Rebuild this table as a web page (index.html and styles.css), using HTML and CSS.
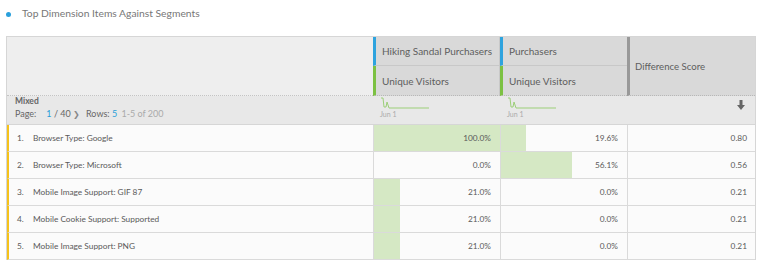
FILE: index.html
```html
<!DOCTYPE html>
<html>
<head>
<meta charset="utf-8">
<link rel="stylesheet" href="styles.css">
</head>
<body>
<div class="title"><span class="dot"></span><span>Top Dimension Items Against Segments</span></div>
<div class="table">
  <div class="h-dim"></div>
  <div class="h-seg blue c2">Hiking Sandal Purchasers</div>
  <div class="h-seg blue c3">Purchasers</div>
  <div class="h-diff">Difference Score</div>
  <div class="h-met green c2">Unique Visitors</div>
  <div class="h-met green c3">Unique Visitors</div>

  <div class="ctrl-dim">
    <div class="mixed">Mixed</div>
    <div class="pager">Page:<span class="blue-t p1">1</span> / 40<span class="chev">&#x276F;</span> Rows: <span class="blue-t">5</span> <span class="muted">1-5 of 200</span></div>
  </div>
  <div class="ctrl-spark">
    <svg width="50" height="12" viewBox="0 0 50 12"><path d="M1 1 L3 1 L4 10 L6 10 L7 5 L9 11 L49 11" fill="none" stroke="#9ccf78" stroke-width="1"/></svg>
    <div class="jun">Jun 1</div>
  </div>
  <div class="ctrl-spark">
    <svg width="50" height="12" viewBox="0 0 50 12"><path d="M1 1 L3 1 L4 10 L6 10 L7 5 L9 11 L49 11" fill="none" stroke="#9ccf78" stroke-width="1"/></svg>
    <div class="jun">Jun 1</div>
  </div>
  <div class="ctrl-dl">
    <svg width="8" height="10" viewBox="0 0 8 10"><path d="M2.5 0 H5.5 V5 H8 L4 10 L0 5 H2.5 Z" fill="#666"/></svg>
  </div>

  <div class="row">
    <div class="dim"><span class="num">1.</span>Browser Type: Google</div>
    <div class="val"><span class="bar" style="width:100%"></span><span class="t">100.0%</span></div>
    <div class="val"><span class="bar" style="width:19.6%"></span><span class="t">19.6%</span></div>
    <div class="score">0.80</div>
  </div>
  <div class="row">
    <div class="dim"><span class="num">2.</span>Browser Type: Microsoft</div>
    <div class="val"><span class="bar" style="width:0%"></span><span class="t">0.0%</span></div>
    <div class="val"><span class="bar" style="width:56.1%"></span><span class="t">56.1%</span></div>
    <div class="score">0.56</div>
  </div>
  <div class="row">
    <div class="dim"><span class="num">3.</span>Mobile Image Support: GIF 87</div>
    <div class="val"><span class="bar" style="width:21%"></span><span class="t">21.0%</span></div>
    <div class="val"><span class="bar" style="width:0%"></span><span class="t">0.0%</span></div>
    <div class="score">0.21</div>
  </div>
  <div class="row">
    <div class="dim"><span class="num">4.</span>Mobile Cookie Support: Supported</div>
    <div class="val"><span class="bar" style="width:21%"></span><span class="t">21.0%</span></div>
    <div class="val"><span class="bar" style="width:0%"></span><span class="t">0.0%</span></div>
    <div class="score">0.21</div>
  </div>
  <div class="row">
    <div class="dim"><span class="num">5.</span>Mobile Image Support: PNG</div>
    <div class="val"><span class="bar" style="width:21%"></span><span class="t">21.0%</span></div>
    <div class="val"><span class="bar" style="width:0%"></span><span class="t">0.0%</span></div>
    <div class="score">0.21</div>
  </div>
</div>
</body>
</html>
```

FILE: styles.css
```css
* { box-sizing: border-box; }
body {
  margin: 0;
  background: #fff;
  font-family: Lato, "Open Sans", sans-serif;
  color: #666;
  width: 760px;
  height: 268px;
  overflow: hidden;
}
.title {
  height: 36px;
  display: flex;
  align-items: flex-start;
  padding: 6px 0 0 6px;
  font-size: 10.3px;
  color: #777;
  line-height: 14px;
}
.dot {
  width: 5px;
  height: 5px;
  border-radius: 50%;
  background: #2aa0dc;
  margin: 6px 11px 0 0;
}
.table {
  margin-left: 6px;
  width: 750px;
  display: grid;
  grid-template-columns: 366px 127px 127px 128px;
  grid-template-rows: 29px 30px 29px repeat(5, 27px);
  border: 1px solid #d6d6d6;
  border-bottom: none;
}
.h-dim {
  grid-column: 1;
  grid-row: 1 / span 2;
  background: #eeeeee;
  border-bottom: 1px dotted #c4c4c4;
}
.h-seg, .h-met {
  background: #d9d9d9;
  display: flex;
  align-items: center;
  padding-left: 6px;
  font-size: 10px;
  color: #5e5e5e;
}
.h-seg { border-bottom: 1px solid #c8c8c8; }
.h-met { border-bottom: 1px dotted #b8b8b8; }
.c2 { grid-column: 2; }
.c3 { grid-column: 3; }
.h-seg.c2, .h-met.c2 { border-right: 1px solid #c8c8c8; }
.blue { border-left: 3px solid #2ea3de; }
.green { border-left: 3px solid #7cc142; }
.h-diff {
  grid-column: 4;
  grid-row: 1 / span 2;
  background: #d9d9d9;
  border-left: 3px solid #999;
  border-bottom: 1px dotted #b8b8b8;
  display: flex;
  align-items: center;
  padding-left: 5px;
  font-size: 9.6px;
  color: #5e5e5e;
}
.ctrl-dim, .ctrl-spark, .ctrl-dl {
  background: #e8e8e8;
  border-bottom: 1px solid #d6d6d6;
}
.ctrl-dim {
  padding: 1px 0 0 8px;
  font-size: 9px;
}
.mixed {
  font-weight: bold;
  font-size: 8.5px;
  line-height: 9px;
  color: #666;
}
.pager {
  margin-top: 2px;
  line-height: 12px;
  color: #666;
}
.p1 { margin-left: 10px; }
.blue-t { color: #2a9fd8; }
.muted { color: #aaa; margin-left: 2px; }
.chev { font-size: 8px; margin: 0 4px 0 2px; color: #888; }
.ctrl-spark {
  padding: 1px 0 0 7px;
}
.ctrl-spark svg { display: block; }
.jun {
  font-size: 7px;
  color: #aaa;
  line-height: 9px;
  margin-top: 1px;
}
.ctrl-dl {
  display: flex;
  justify-content: flex-end;
  padding: 4px 10px 0 0;
}
.row { display: contents; }
.row > div {
  background: #fbfbfb;
  border-bottom: 1px solid #dadada;
  font-size: 8.3px;
  color: #5a5a5a;
}
.dim {
  border-left: 2px solid #f5c21b;
  display: flex;
  align-items: center;
  padding-left: 8px;
}
.num { width: 16px; }
.val {
  position: relative;
  border-left: 1px solid #dadada;
  display: flex;
  align-items: center;
  justify-content: flex-end;
  padding-right: 9px;
}
.bar {
  position: absolute;
  left: 0;
  top: 0;
  bottom: 0;
  background: #d5e8c4;
}
.t { position: relative; }
.score {
  border-left: 1px solid #dadada;
  display: flex;
  align-items: center;
  justify-content: flex-end;
  padding-right: 8px;
}
```
